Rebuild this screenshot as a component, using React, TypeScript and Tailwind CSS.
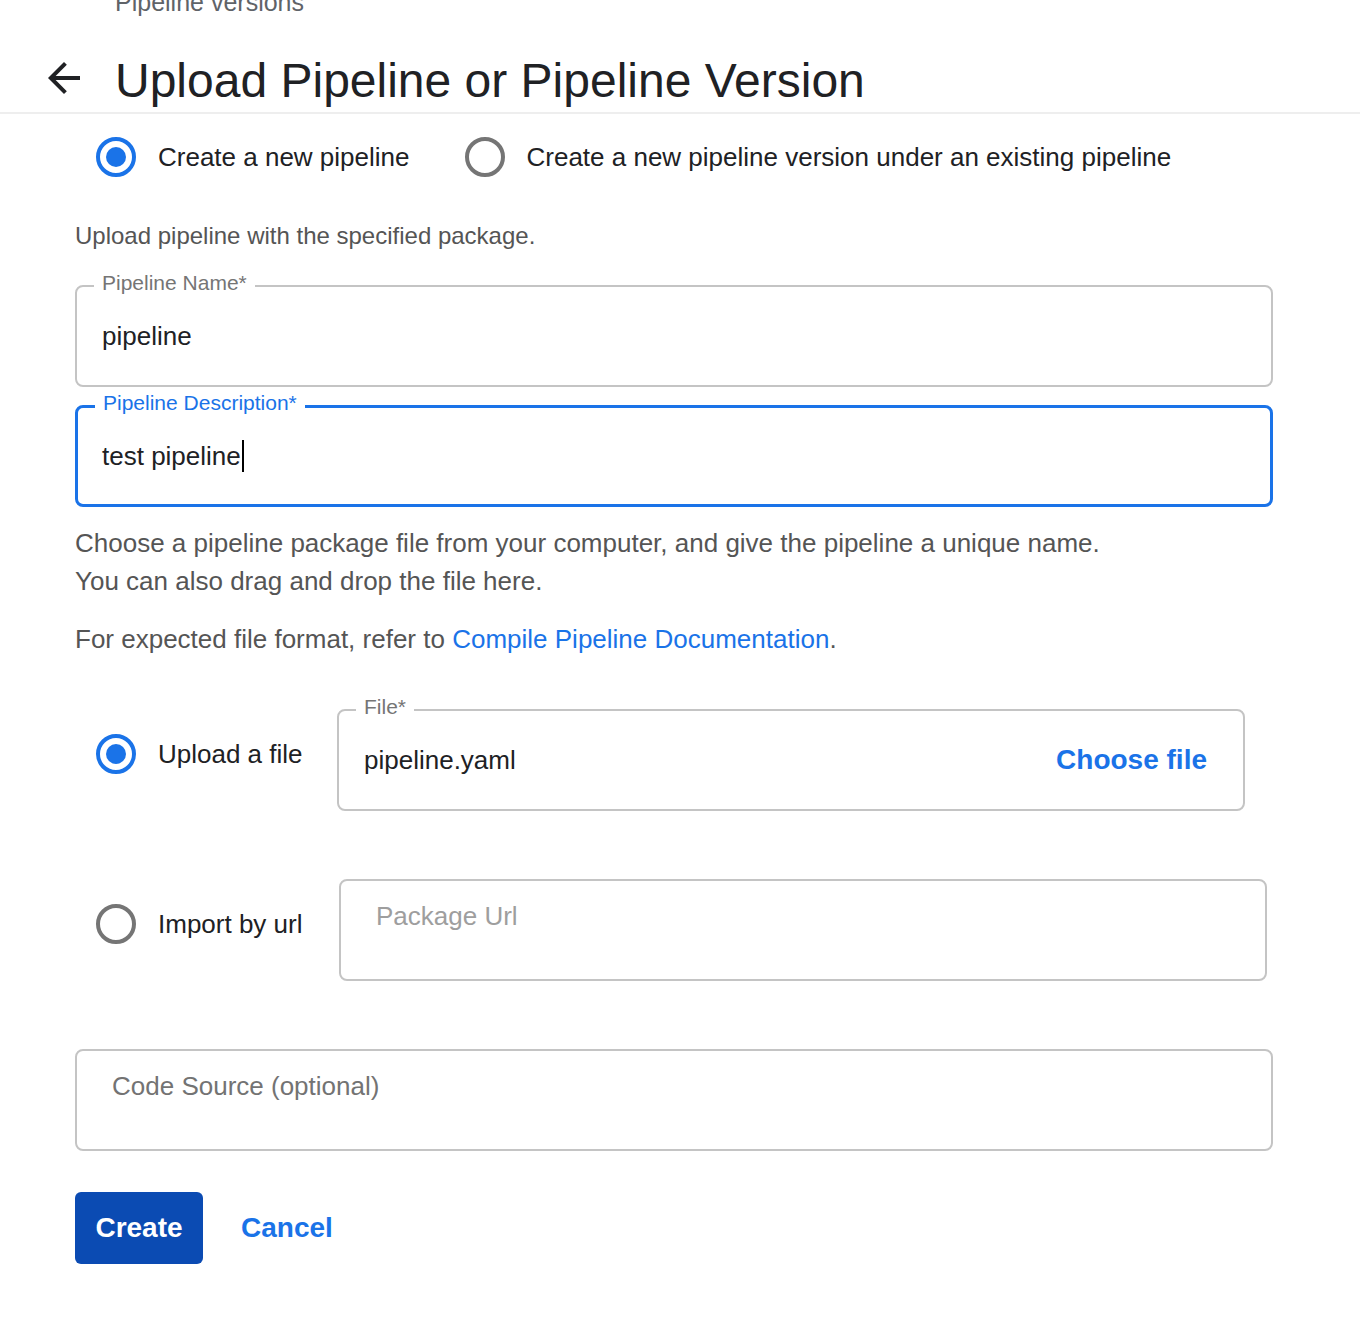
import React from 'react';

const BLUE = '#1a73e8';

function Radio({ checked }: { checked: boolean }) {
  return (
    <span
      className={`flex h-10 w-10 shrink-0 items-center justify-center rounded-full border-4 ${
        checked ? 'border-[#1a73e8]' : 'border-[#757575]'
      }`}
    >
      {checked && <span className="h-5 w-5 rounded-full bg-[#1a73e8]" />}
    </span>
  );
}

function OutlinedField({
  label,
  value,
  focused,
  children,
  className,
}: {
  label: string;
  value?: string;
  focused?: boolean;
  children?: React.ReactNode;
  className?: string;
}) {
  return (
    <div
      className={`relative flex h-[102px] items-center rounded-[8px] ${
        focused ? 'border-[3px] border-[#1a73e8] pl-[24px]' : 'border-2 border-[#c4c4c4] pl-[25px]'
      } ${className ?? ''}`}
    >
      <span
        className={`absolute left-[17px] top-[-16px] bg-white px-[8px] text-[21px] leading-6 ${
          focused ? 'text-[#1a73e8] top-[-17px] left-[16px]' : 'text-[#757575]'
        }`}
      >
        {label}
      </span>
      <span className="text-[26px] leading-8 text-[#202124]">{value}</span>
      {children}
    </div>
  );
}

export default function App() {
  return (
    <div
      className="min-h-screen overflow-hidden bg-white"
      style={{ fontFamily: '"Liberation Sans", Arial, sans-serif' }}
    >
      {/* breadcrumb */}
      <div className="-mt-[14px] pl-[115px] text-[25px] leading-8 text-[#5f6368]">Pipeline versions</div>

      {/* header */}
      <div className="mt-[35px] mb-[3px] flex items-center pl-[40px]">
        <svg width="48" height="48" viewBox="0 0 24 24" className="mt-[-6px]">
          <path
            d="M20 11H7.83l5.59-5.59L12 4l-8 8 8 8 1.41-1.41L7.83 13H20v-2z"
            fill="#202124"
          />
        </svg>
        <h1 className="ml-[27px] text-[48px] leading-[56px] text-[#202124]">
          Upload Pipeline or Pipeline Version
        </h1>
      </div>
      <div className="border-b-2 border-[#eeeeee]" />

      <div className="w-[1273px] pl-[75px]">
        {/* mode radios */}
        <div className="mt-[19px] ml-[21px] flex h-12 items-center text-[26px] text-[#202124]">
          <Radio checked />
          <span className="ml-[22px]">Create a new pipeline</span>
          <span className="ml-[55px]">
            <Radio checked={false} />
          </span>
          <span className="ml-[22px]">Create a new pipeline version under an existing pipeline</span>
        </div>

        <p className="mt-[39px] text-[24px] leading-8 text-[#555555]">
          Upload pipeline with the specified package.
        </p>

        <OutlinedField className="mt-[33px]" label="Pipeline Name*" value="pipeline" />

        <OutlinedField className="mt-[18px]" label="Pipeline Description*" value="test pipeline" focused>
          <span className="ml-[1px] h-[32px] w-[2px] bg-black" />
        </OutlinedField>

        <p className="mt-[17px] text-[26px] leading-[38px] text-[#555555]">
          Choose a pipeline package file from your computer, and give the pipeline a unique name.
          <br />
          You can also drag and drop the file here.
        </p>
        <p className="mt-[20px] text-[26px] leading-[38px] text-[#555555]">
          For expected file format, refer to{' '}
          <a className="text-[#1a73e8]" href="#">
            Compile Pipeline Documentation
          </a>
          .
        </p>

        {/* upload file */}
        <div className="mt-[51px] flex items-start">
          <div className="mt-[21px] flex h-12 w-[262px] items-center pl-[21px] text-[26px] text-[#202124]">
            <Radio checked />
            <span className="ml-[22px]">Upload a file</span>
          </div>
          <OutlinedField className="w-[908px] pr-[36px]" label="File*" value="pipeline.yaml">
            <button className="ml-auto text-[28px] font-bold" style={{ color: BLUE }}>
              Choose file
            </button>
          </OutlinedField>
        </div>

        {/* import by url */}
        <div className="mt-[68px] flex items-start">
          <div className="mt-[21px] flex h-12 w-[264px] items-center pl-[21px] text-[26px] text-[#202124]">
            <Radio checked={false} />
            <span className="ml-[22px]">Import by url</span>
          </div>
          <div className="h-[102px] w-[928px] rounded-[8px] border-2 border-[#c4c4c4] pl-[35px] pt-[19px] text-[26px] leading-8 text-[#9e9e9e]">
            Package Url
          </div>
        </div>

        {/* code source */}
        <div className="mt-[68px] h-[102px] rounded-[8px] border-2 border-[#c4c4c4] pl-[35px] pt-[19px] text-[26px] leading-8 text-[#737373]">
          Code Source (optional)
        </div>

        {/* actions */}
        <div className="mt-[41px] flex items-center">
          <button className="h-[72px] w-[128px] rounded-[6px] bg-[#0b4bb3] text-[28px] font-bold text-white">
            Create
          </button>
          <button className="ml-[38px] text-[28px] font-bold text-[#1a73e8]">Cancel</button>
        </div>
      </div>
    </div>
  );
}
